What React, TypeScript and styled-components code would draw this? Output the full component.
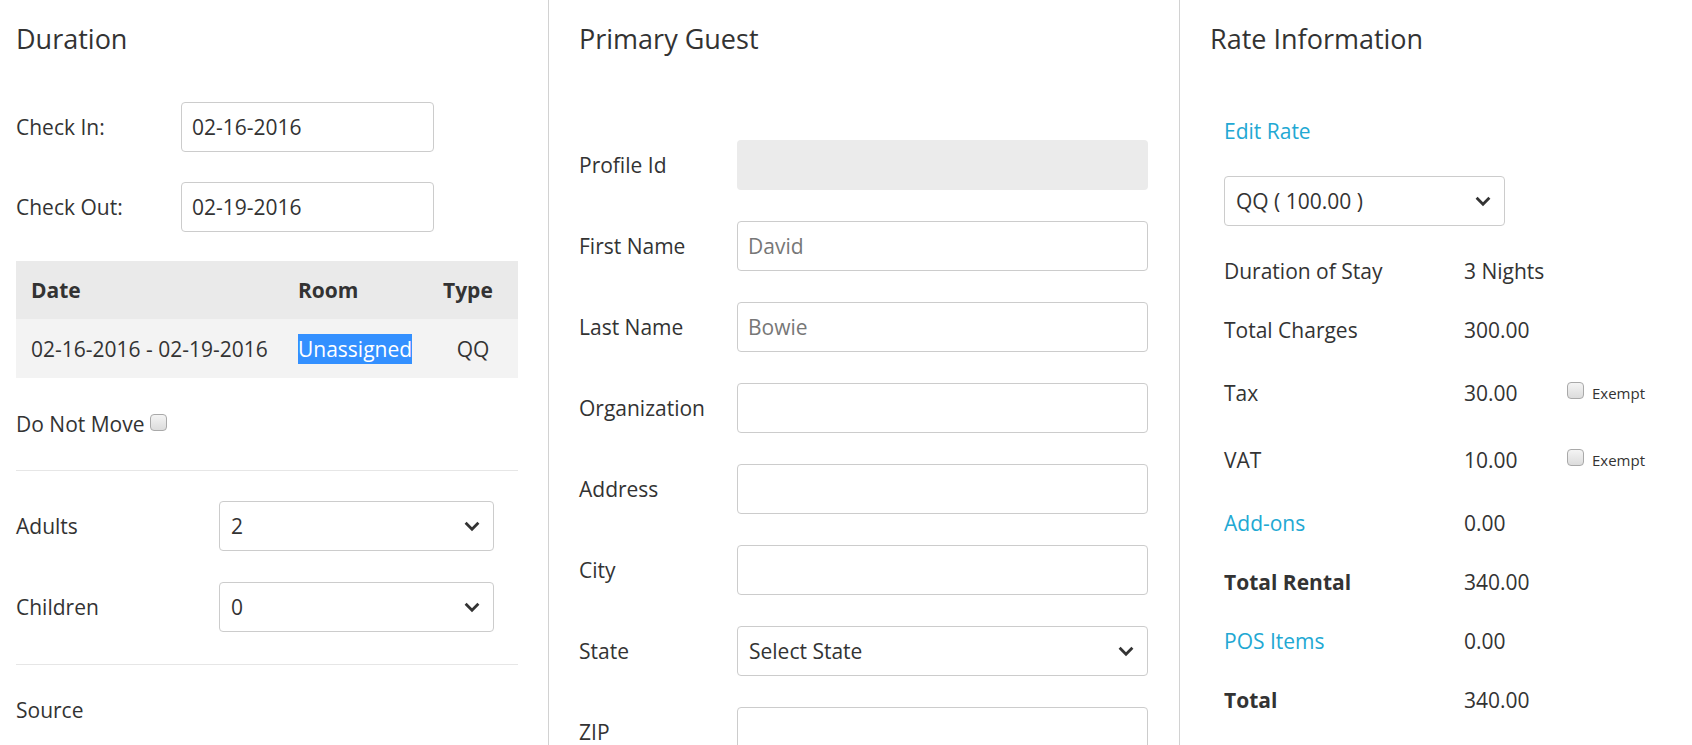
import React from 'react'
import styled, { createGlobalStyle } from 'styled-components'

const GlobalStyle = createGlobalStyle`
    html, body {
        margin: 0;
        padding: 0;
        background: #fff;
    }
    body {
        font-family: 'Open Sans', 'Noto Sans', sans-serif;
        font-size: 21px;
        color: #333;
    }
    * {
        box-sizing: border-box;
    }
`

const Page = styled.div`
    display: grid;
    grid-template-columns: 548px 631px 1fr;
    height: 745px;
    overflow: hidden;
`

const Column = styled.section<{ $pad: number; $divider?: boolean }>`
    padding: 24px 0 0 ${(p) => p.$pad}px;
    border-left: ${(p) => (p.$divider ? '1px solid #d2d2d2' : 'none')};
`

const Heading = styled.h3`
    margin: 0;
    font-size: 27px;
    font-weight: 400;
    line-height: 30px;
    color: #333;
`

const Fields = styled.div<{ $top: number; $gap: number; $width?: number }>`
    display: flex;
    flex-direction: column;
    gap: ${(p) => p.$gap}px;
    margin-top: ${(p) => p.$top}px;
    width: ${(p) => (p.$width ? `${p.$width}px` : 'auto')};
`

const Field = styled.div<{ $label: number }>`
    display: grid;
    grid-template-columns: ${(p) => p.$label}px 1fr;
    align-items: center;
`

const Label = styled.label`
    line-height: 28px;
`

const TextInput = styled.input<{ $muted?: boolean }>`
    height: 50px;
    width: 100%;
    padding: 0 10px;
    border: 1px solid #ccc;
    border-radius: 4px;
    font: inherit;
    color: ${(p) => (p.$muted ? '#777' : '#333')};
    background: #fff;
    outline: none;
`

const DisabledInput = styled.div`
    height: 50px;
    border-radius: 4px;
    background: #ebebeb;
`

const Select = styled.div<{ $width?: number }>`
    display: flex;
    align-items: center;
    justify-content: space-between;
    height: 50px;
    width: ${(p) => (p.$width ? `${p.$width}px` : '100%')};
    padding: 0 13px 0 11px;
    border: 1px solid #ccc;
    border-radius: 4px;
    background: #fff;
    color: #333;
`

const Chevron = () => (
    <svg width="16" height="11" viewBox="0 0 16 11">
        <polyline points="1.6,1.8 8,8.2 14.4,1.8" fill="none" stroke="#333" strokeWidth="2.8" />
    </svg>
)

const StayTable = styled.table`
    margin-top: 29px;
    width: 502px;
    border-collapse: collapse;
    table-layout: fixed;
`

const Th = styled.th<{ $w: number }>`
    width: ${(p) => p.$w}px;
    height: 58px;
    padding: 0 0 0 15px;
    background: #eaeaea;
    text-align: left;
    font-weight: 700;
`

const Td = styled.td<{ $center?: boolean }>`
    height: 59px;
    padding: ${(p) => (p.$center ? '0' : '0 0 0 15px')};
    background: #f3f3f3;
    text-align: ${(p) => (p.$center ? 'center' : 'left')};
`

const Highlight = styled.span`
    display: inline-block;
    line-height: 30px;
    background: #3390ff;
    color: #fff;
`

const CheckLine = styled.div<{ $top: number }>`
    display: flex;
    align-items: center;
    gap: 5px;
    margin-top: ${(p) => p.$top}px;
    line-height: 28px;
`

const Checkbox = styled.span`
    display: inline-block;
    width: 17px;
    height: 17px;
    margin-top: -4px;
    border: 1px solid #a9a9a9;
    border-radius: 4px;
    background: linear-gradient(#f4f4f4, #dcdcdc);
`

const Rule = styled.hr<{ $top: number }>`
    width: 502px;
    margin: ${(p) => p.$top}px 0 0;
    border: 0;
    border-top: 1px solid #e6e6e6;
`

const Plain = styled.div<{ $top: number }>`
    margin-top: ${(p) => p.$top}px;
    line-height: 28px;
`

const RateBody = styled.div`
    padding-left: 14px;
`

const Link = styled.a<{ $top?: number }>`
    display: inline-block;
    margin-top: ${(p) => p.$top ?? 0}px;
    line-height: 28px;
    color: #22a8d3;
    text-decoration: none;
`

const RateGrid = styled.div`
    display: grid;
    grid-template-columns: 240px 103px auto;
    margin-top: 15px;
`

const RateCell = styled.div<{ $h: number; $bold?: boolean }>`
    display: flex;
    align-items: center;
    gap: 8px;
    height: ${(p) => p.$h}px;
    font-weight: ${(p) => (p.$bold ? 700 : 400)};
`

const Small = styled.span`
    font-size: 15px;
`

const guestFields = [
    { label: 'First Name', value: 'David' },
    { label: 'Last Name', value: 'Bowie' },
    { label: 'Organization', value: '' },
    { label: 'Address', value: '' },
    { label: 'City', value: '' },
]

interface Rate {
    label: string
    value: string
    link?: boolean
    bold?: boolean
    exempt?: boolean
}

const rates: Rate[] = [
    { label: 'Duration of Stay', value: '3 Nights' },
    { label: 'Total Charges', value: '300.00' },
    { label: 'Tax', value: '30.00', exempt: true },
    { label: 'VAT', value: '10.00', exempt: true },
    { label: 'Add-ons', value: '0.00', link: true },
    { label: 'Total Rental', value: '340.00', bold: true },
    { label: 'POS Items', value: '0.00', link: true },
    { label: 'Total', value: '340.00', bold: true },
]

const App: React.FC = () => {
    return (
        <>
            <GlobalStyle />
            <Page>
                <Column $pad={16}>
                    <Heading>Duration</Heading>
                    <Fields $top={48} $gap={30} $width={418}>
                        <Field $label={165}>
                            <Label>Check In:</Label>
                            <TextInput defaultValue="02-16-2016" />
                        </Field>
                        <Field $label={165}>
                            <Label>Check Out:</Label>
                            <TextInput defaultValue="02-19-2016" />
                        </Field>
                    </Fields>
                    <StayTable>
                        <thead>
                            <tr>
                                <Th $w={267}>Date</Th>
                                <Th $w={145}>Room</Th>
                                <Th $w={90}>Type</Th>
                            </tr>
                        </thead>
                        <tbody>
                            <tr>
                                <Td>02-16-2016 - 02-19-2016</Td>
                                <Td><Highlight>Unassigned</Highlight></Td>
                                <Td $center>QQ</Td>
                            </tr>
                        </tbody>
                    </StayTable>
                    <CheckLine $top={32}>
                        Do Not Move <Checkbox />
                    </CheckLine>
                    <Rule $top={32} />
                    <Fields $top={30} $gap={31} $width={478}>
                        <Field $label={203}>
                            <Label>Adults</Label>
                            <Select>2<Chevron /></Select>
                        </Field>
                        <Field $label={203}>
                            <Label>Children</Label>
                            <Select>0<Chevron /></Select>
                        </Field>
                    </Fields>
                    <Rule $top={32} />
                    <Plain $top={31}>Source</Plain>
                </Column>

                <Column $pad={30} $divider>
                    <Heading>Primary Guest</Heading>
                    <Fields $top={86} $gap={31} $width={569}>
                        <Field $label={158}>
                            <Label>Profile Id</Label>
                            <DisabledInput />
                        </Field>
                        {guestFields.map((f) => (
                            <Field $label={158} key={f.label}>
                                <Label>{f.label}</Label>
                                <TextInput $muted defaultValue={f.value} />
                            </Field>
                        ))}
                        <Field $label={158}>
                            <Label>State</Label>
                            <Select>Select State<Chevron /></Select>
                        </Field>
                        <Field $label={158}>
                            <Label>ZIP</Label>
                            <TextInput />
                        </Field>
                    </Fields>
                </Column>

                <Column $pad={30} $divider>
                    <Heading>Rate Information</Heading>
                    <RateBody>
                        <Link href="#" $top={63}>Edit Rate</Link>
                        <Fields $top={31} $gap={0}>
                            <Select $width={281}>QQ ( 100.00 )<Chevron /></Select>
                        </Fields>
                        <RateGrid>
                            {rates.map((r) => {
                                const h = r.exempt ? 67 : 59
                                return (
                                    <React.Fragment key={r.label}>
                                        <RateCell $h={h} $bold={r.bold}>
                                            {r.link ? <Link href="#">{r.label}</Link> : r.label}
                                        </RateCell>
                                        <RateCell $h={h}>{r.value}</RateCell>
                                        <RateCell $h={h}>
                                            {r.exempt && (
                                                <>
                                                    <Checkbox />
                                                    <Small>Exempt</Small>
                                                </>
                                            )}
                                        </RateCell>
                                    </React.Fragment>
                                )
                            })}
                        </RateGrid>
                    </RateBody>
                </Column>
            </Page>
        </>
    )
}

export default App
